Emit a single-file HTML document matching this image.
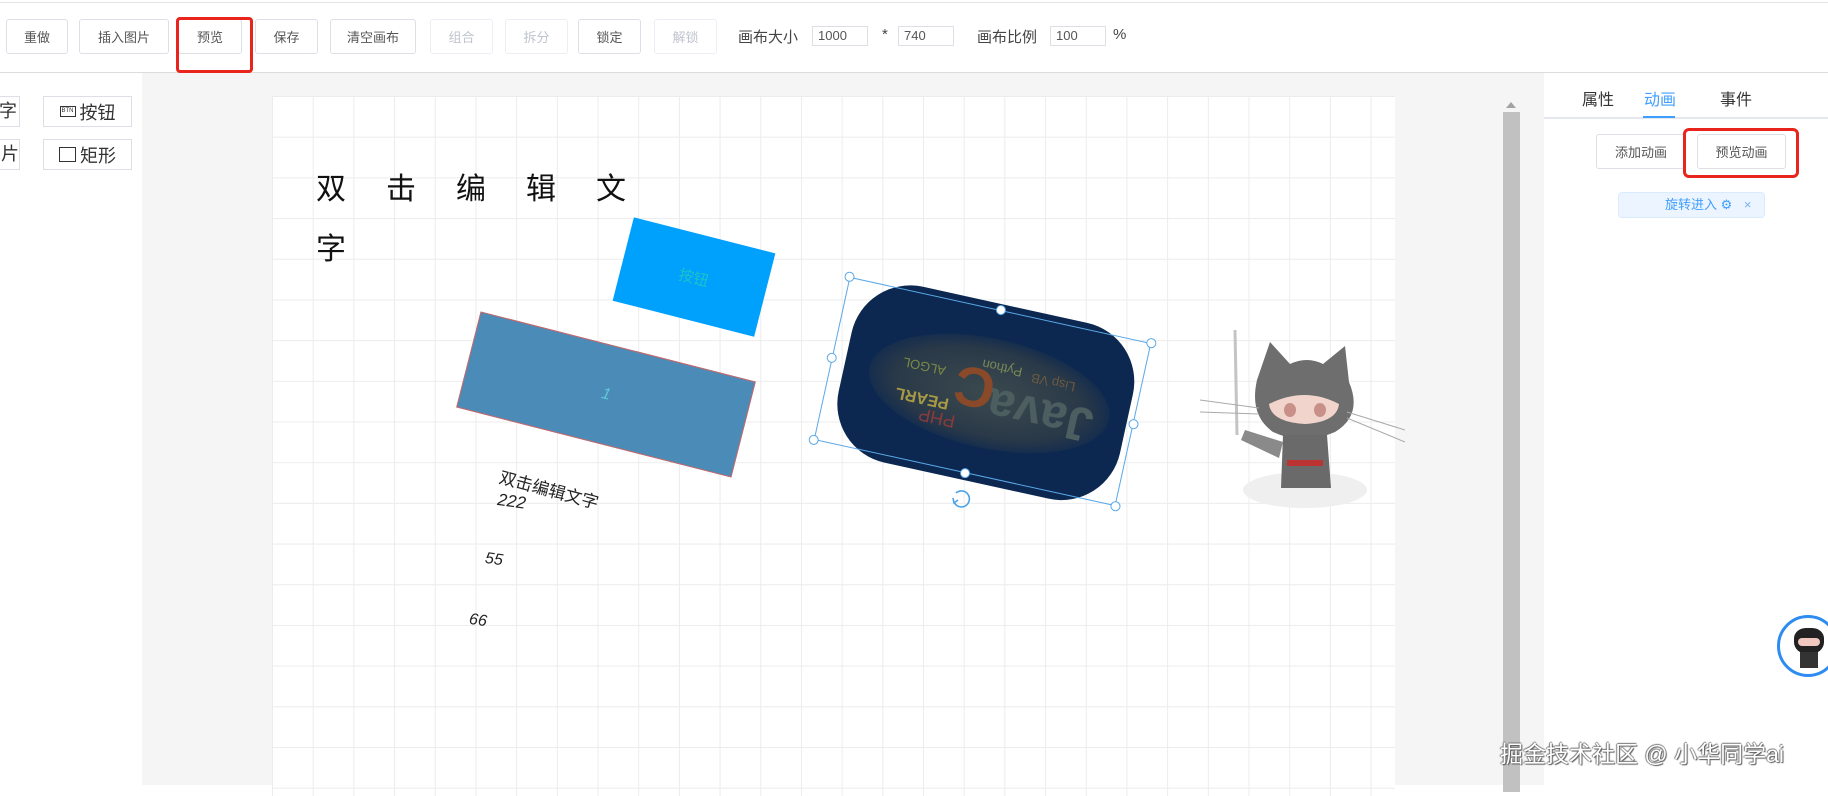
<!DOCTYPE html>
<html><head><meta charset="utf-8"><style>
*{box-sizing:border-box;margin:0;padding:0}
body{width:1828px;height:785px;overflow:hidden;background:#fff;font-family:"Liberation Sans","Noto Sans CJK SC",sans-serif;position:relative;color:#333}
.abs{position:absolute}
.btn{position:absolute;top:19px;height:35px;border:1px solid #dcdfe6;border-radius:3px;background:#fff;font-size:13px;color:#555;display:flex;align-items:center;justify-content:center}
.dis{color:#c0c4cc;border-color:#ebeef5}
.inp{position:absolute;top:26px;height:20px;border:1px solid #dcdfe6;font-size:13px;color:#555;padding-left:5px;line-height:18px}
.lbl{position:absolute;top:26px;font-size:15px;color:#444}
.grid{background-color:#fff;background-image:linear-gradient(#ececec 1px,transparent 1px),linear-gradient(90deg,#ececec 1px,transparent 1px);background-size:40.7px 40.7px}
.rot{position:absolute;transform-origin:center}
</style></head><body>
<div class="abs" style="left:0;top:2px;width:1828px;height:1px;background:#e4e4e4"></div>
<div class="abs" style="left:0;top:72px;width:1828px;height:1px;background:#dcdcdc"></div>
<div class="btn" style="left:6px;width:62px">重做</div>
<div class="btn" style="left:79px;width:90px">插入图片</div>
<div class="btn" style="left:178px;width:64px">预览</div>
<div class="btn" style="left:255px;width:63px">保存</div>
<div class="btn" style="left:330px;width:86px">清空画布</div>
<div class="btn dis" style="left:430px;width:63px">组合</div>
<div class="btn dis" style="left:505px;width:63px">拆分</div>
<div class="btn" style="left:578px;width:63px">锁定</div>
<div class="btn dis" style="left:654px;width:63px">解锁</div>
<div class="lbl" style="left:738px">画布大小</div>
<div class="inp" style="left:812px;width:56px">1000</div>
<div class="lbl" style="left:882px">*</div>
<div class="inp" style="left:898px;width:56px">740</div>
<div class="lbl" style="left:977px">画布比例</div>
<div class="inp" style="left:1050px;width:56px">100</div>
<div class="lbl" style="left:1113px">%</div>
<div class="abs" style="left:176px;top:17px;width:77px;height:56px;border:3px solid #e8241c;border-radius:4px"></div>

<div class="abs" style="left:-10px;top:96px;width:30px;height:31px;border:1px solid #dcdfe6;font-size:18px;text-align:right;padding-right:2px;line-height:29px">字</div>
<div class="abs" style="left:-10px;top:139px;width:30px;height:31px;border:1px solid #dcdfe6;font-size:18px;text-align:right;line-height:29px">片</div>
<div class="abs" style="left:43px;top:96px;width:89px;height:31px;border:1px solid #dcdfe6;font-size:18px;display:flex;align-items:center;justify-content:center;gap:4px"><span style="border:1px solid #333;font-size:6px;line-height:9px;padding:0 1px">BTN</span>按钮</div>
<div class="abs" style="left:43px;top:139px;width:89px;height:31px;border:1px solid #dcdfe6;font-size:18px;display:flex;align-items:center;justify-content:center;gap:4px"><span style="border:1.5px solid #333;width:17px;height:15px"></span>矩形</div>

<div class="abs" style="left:142px;top:73px;width:1402px;height:712px;background:#f5f5f5"></div>
<div class="abs grid" style="left:272px;top:96px;width:1123px;height:700px"></div>
<div class="abs" style="left:1503px;top:112px;width:17px;height:680px;background:#c1c1c1"></div>
<div class="abs" style="left:1506px;top:102px;width:0;height:0;border-left:5px solid transparent;border-right:5px solid transparent;border-bottom:6px solid #a3a3a3"></div>

<div class="abs" style="left:316px;top:160px;font-size:30px;color:#111;letter-spacing:40px;width:380px;line-height:60px">双击编辑文字</div>

<div class="rot" style="left:620.5px;top:234px;width:145.5px;height:86px;background:#00a0fd;transform:rotate(14.3deg);color:#1cc3c8;font-size:15px;display:flex;align-items:center;justify-content:center">按钮</div>
<div class="rot" style="left:464px;top:344.5px;width:284px;height:99px;background:#4b8bb8;border:1px solid #c66;transform:rotate(14.3deg);color:#5ec9d6;font-size:16px;font-style:italic;display:flex;align-items:center;justify-content:center">1</div>
<div class="rot" style="left:502px;top:468px;font-size:17px;color:#222;transform:rotate(15deg);transform-origin:left top;line-height:20px">双击编辑文字</div>
<div class="rot" style="left:499px;top:490px;font-size:17px;color:#222;font-style:italic;transform:rotate(8deg);transform-origin:left top">222</div>
<div class="rot" style="left:485px;top:551px;font-size:16px;color:#222;font-style:italic;transform:rotate(8deg)">55</div>
<div class="rot" style="left:469px;top:612px;font-size:16px;color:#222;font-style:italic;transform:rotate(8deg)">66</div>

<div class="rot" style="left:827.5px;top:307.5px;width:309px;height:167px;transform:rotate(12.4deg)">
 <div style="position:absolute;left:14px;top:-6px;width:288px;height:180px;background:#0c2850;border-radius:60px;overflow:hidden">
  <div style="position:absolute;left:25px;top:35px;width:245px;height:110px;border-radius:50%;background:radial-gradient(ellipse,#3b4a4e 0%,#2a3948 55%,#0c2850 78%);transform:rotate(180deg)">
   <span style="position:absolute;left:15px;top:18px;font-size:48px;color:#4c5e60;font-weight:bold">Java</span>
   <span style="position:absolute;left:118px;top:30px;font-size:56px;color:#8a4a2a;font-weight:bold;line-height:1">C</span>
   <span style="position:absolute;left:160px;top:28px;font-size:16px;color:#a89a45;font-weight:bold">PEARL</span>
   <span style="position:absolute;left:150px;top:10px;font-size:18px;color:#8b3a3a">PHP</span>
   <span style="position:absolute;left:95px;top:75px;font-size:13px;color:#7a8a55">Python</span>
   <span style="position:absolute;left:40px;top:72px;font-size:13px;color:#6a5a40">Lisp VB</span>
   <span style="position:absolute;left:170px;top:60px;font-size:13px;color:#7a8a45">ALGOL</span>
  </div>
 </div>
 <div style="position:absolute;inset:0;border:1px solid #5aa8e8"></div>
 <i style="position:absolute;left:-5px;top:-5px;width:10px;height:10px;border:1px solid #5aa8e8;border-radius:50%;background:#fff"></i>
 <i style="position:absolute;right:-5px;top:-5px;width:10px;height:10px;border:1px solid #5aa8e8;border-radius:50%;background:#fff"></i>
 <i style="position:absolute;left:-5px;bottom:-5px;width:10px;height:10px;border:1px solid #5aa8e8;border-radius:50%;background:#fff"></i>
 <i style="position:absolute;right:-5px;bottom:-5px;width:10px;height:10px;border:1px solid #5aa8e8;border-radius:50%;background:#fff"></i>
 <i style="position:absolute;left:150px;top:-5px;width:10px;height:10px;border:1px solid #5aa8e8;border-radius:50%;background:#fff"></i>
 <i style="position:absolute;left:150px;bottom:-5px;width:10px;height:10px;border:1px solid #5aa8e8;border-radius:50%;background:#fff"></i>
 <i style="position:absolute;left:-5px;top:78px;width:10px;height:10px;border:1px solid #5aa8e8;border-radius:50%;background:#fff"></i>
 <i style="position:absolute;right:-5px;top:78px;width:10px;height:10px;border:1px solid #5aa8e8;border-radius:50%;background:#fff"></i>
</div>
<svg class="abs" style="left:950px;top:488px" width="22" height="22" viewBox="0 0 22 22"><path d="M6 5 A8 8 0 1 1 4 14" fill="none" stroke="#4aa3e8" stroke-width="1.6"/><path d="M3 10 L4 15 L8 12" fill="none" stroke="#4aa3e8" stroke-width="1.6"/></svg>

<svg class="abs" style="left:1195px;top:320px" width="210" height="200" viewBox="0 0 210 200">
 <ellipse cx="110" cy="170" rx="62" ry="18" fill="#efefef"/>
 <line x1="40" y1="10" x2="42" y2="115" stroke="#c4c4c4" stroke-width="3"/>
 <path d="M62 60 L75 22 L95 44 Q112 36 128 44 L150 26 L154 62 Q168 95 140 112 Q108 126 78 112 Q54 95 62 60Z" fill="#6e6e6e"/>
 <path d="M74 84 Q110 66 144 84 Q142 102 110 104 Q76 102 74 84Z" fill="#f1d5cc"/>
 <ellipse cx="95" cy="90" rx="6" ry="7" fill="#c9908a"/><ellipse cx="125" cy="90" rx="6" ry="7" fill="#c9908a"/>
 <path d="M88 115 L132 115 L136 168 L86 168Z" fill="#6a6a6a"/>
 <rect x="92" y="140" width="36" height="6" fill="#b33"/>
 <path d="M88 122 L50 110 L46 120 L84 138Z" fill="#8a8a8a"/>
 <line x1="5" y1="80" x2="64" y2="88" stroke="#aaa"/><line x1="5" y1="92" x2="64" y2="94" stroke="#aaa"/>
 <line x1="152" y1="92" x2="210" y2="110" stroke="#aaa"/><line x1="152" y1="98" x2="210" y2="122" stroke="#aaa"/>
</svg>

<div class="abs" style="left:1544px;top:73px;width:284px;height:712px;background:#fff"></div>
<div class="abs" style="left:1582px;top:86px;font-size:16px;color:#333">属性</div>
<div class="abs" style="left:1644px;top:86px;font-size:16px;color:#409eff">动画</div>
<div class="abs" style="left:1720px;top:86px;font-size:16px;color:#333">事件</div>
<div class="abs" style="left:1544px;top:117px;width:284px;height:2px;background:#e4e7ed"></div>
<div class="abs" style="left:1643px;top:116px;width:32px;height:2px;background:#409eff"></div>
<div class="abs" style="left:1596px;top:134px;width:90px;height:35px;border:1px solid #dcdfe6;border-radius:3px;font-size:13px;display:flex;align-items:center;justify-content:center;color:#555">添加动画</div>
<div class="abs" style="left:1697px;top:134px;width:89px;height:35px;border:1px solid #dcdfe6;border-radius:3px;font-size:13px;display:flex;align-items:center;justify-content:center;color:#555">预览动画</div>
<div class="abs" style="left:1683px;top:128px;width:116px;height:50px;border:3px solid #e8241c;border-radius:6px"></div>
<div class="abs" style="left:1618px;top:192px;width:147px;height:26px;background:#ecf5ff;border:1px solid #d9ecff;border-radius:4px;font-size:13px;color:#409eff;line-height:24px;padding-left:46px">旋转进入 ⚙ <span style="margin-left:8px;color:#79b4f0">×</span></div>

<div class="abs" style="left:1777px;top:615px;width:62px;height:62px;border:3px solid #2d8cf0;border-radius:50%;background:#fff;overflow:hidden">
 <div style="position:absolute;left:14px;top:10px;width:30px;height:26px;background:#222;border-radius:40% 40% 45% 45%"></div>
 <div style="position:absolute;left:18px;top:20px;width:22px;height:8px;background:#f0c8c0;border-radius:4px"></div>
 <div style="position:absolute;left:20px;top:34px;width:18px;height:16px;background:#333"></div>
</div>

<div class="abs" style="left:1500px;top:735px;font-size:23px;color:#fff;text-shadow:1px 1px 1px #555,-1px 0 1px #777,0 -1px 1px #777;white-space:nowrap">掘金技术社区 @ 小华同学ai</div>
</body></html>
